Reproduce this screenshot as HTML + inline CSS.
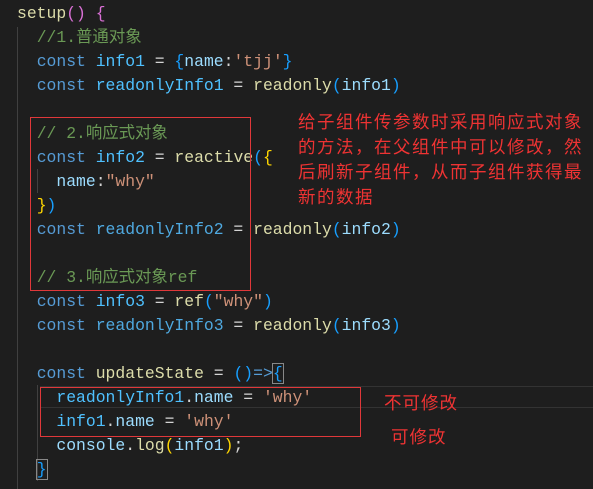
<!DOCTYPE html>
<html><head><meta charset="utf-8"><style>
body{margin:0;width:593px;height:489px;background:#1e1e1e;overflow:hidden;position:relative;font-family:"Liberation Mono","Noto Sans CJK SC",monospace;}
.code{position:absolute;left:17px;top:2px;font-size:16.4px;line-height:24px;color:#d4d4d4;white-space:pre;}
.k{color:#569cd6}.v{color:#9cdcfe}.c{color:#4fc1ff}.f{color:#dcdcaa}.s{color:#ce9178}.cm{color:#6a9955}
.y{color:#ffd700}.p{color:#da70d6}.b{color:#179fff}
.box{position:absolute;border:1px solid #e0383a;}
.g{position:absolute;background:#404040;width:1px}
.r{position:absolute;color:#ee3333;font-family:"Noto Sans CJK SC",sans-serif;font-size:17.5px;letter-spacing:1.5px;line-height:25px;white-space:pre}
</style></head><body>
<div class="g" style="left:17px;top:27px;height:462px"></div>
<div class="g" style="left:37px;top:169px;height:24px"></div>
<div class="g" style="left:37px;top:385px;height:96px"></div>
<div style="position:absolute;left:40px;top:386px;width:553px;height:1px;background:#333"></div>
<div style="position:absolute;left:40px;top:407px;width:553px;height:1px;background:#333"></div>
<div class="code"><span class="f">setup</span><span class="p">()</span> <span class="p">{</span>
  <span class="cm">//1.普通对象</span>
  <span class="k">const</span> <span class="c">info1</span> = <span class="b">{</span><span class="v">name</span>:<span class="s">'tjj'</span><span class="b">}</span>
  <span class="k">const</span> <span class="c">readonlyInfo1</span> = <span class="f">readonly</span><span class="b">(</span><span class="v">info1</span><span class="b">)</span>

  <span class="cm">// 2.响应式对象</span>
  <span class="k">const</span> <span class="c">info2</span> = <span class="f">reactive</span><span class="b">(</span><span class="y">{</span>
    <span class="v">name</span>:<span class="s">"why"</span>
  <span class="y">}</span><span class="b">)</span>
  <span class="k">const</span> <span class="c" style="color:#4fa9e0">readonlyInfo2</span> = <span class="f">readonly</span><span class="b">(</span><span class="v">info2</span><span class="b">)</span>

  <span class="cm">// 3.响应式对象ref</span>
  <span class="k">const</span> <span class="c">info3</span> = <span class="f">ref</span><span class="b">(</span><span class="s">"why"</span><span class="b">)</span>
  <span class="k">const</span> <span class="c" style="color:#4fa9e0">readonlyInfo3</span> = <span class="f">readonly</span><span class="b">(</span><span class="v">info3</span><span class="b">)</span>

  <span class="k">const</span> <span class="f">updateState</span> = <span class="b">()</span><span class="k">=&gt;</span><span class="b" style="outline:1px solid #888">{</span>
    <span class="c">readonlyInfo1</span>.<span class="v">name</span> = <span class="s">'why'</span>
    <span class="c">info1</span>.<span class="v">name</span> = <span class="s">'why'</span>
    <span class="v">console</span>.<span class="f">log</span><span class="y">(</span><span class="v">info1</span><span class="y">)</span>;
  <span class="b" style="outline:1px solid #888">}</span></div>
<div class="box" style="left:30px;top:117px;width:219px;height:172px"></div>
<div class="box" style="left:40px;top:387px;width:319px;height:48px"></div>
<div class="r" style="left:298px;top:109px">给子组件传参数时采用响应式对象
的方法，在父组件中可以修改，然
后刷新子组件，从而子组件获得最
新的数据</div>
<div class="r" style="left:384px;top:390px;letter-spacing:1px">不可修改</div>
<div class="r" style="left:391px;top:424px;letter-spacing:1px">可修改</div>
</body></html>
